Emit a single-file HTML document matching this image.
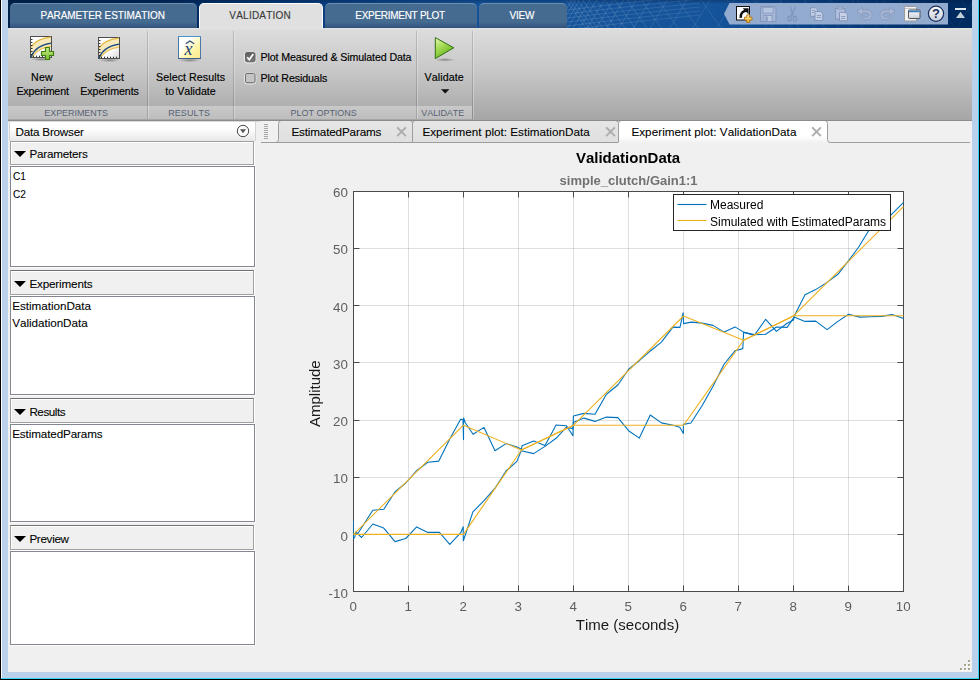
<!DOCTYPE html>
<html>
<head>
<meta charset="utf-8">
<title>Parameter Estimation - Validation</title>
<style>
html,body{margin:0;padding:0;}
body{width:980px;height:680px;overflow:hidden;background:#f0f0f0;position:relative;font-family:"Liberation Sans",sans-serif;color:#000;}
.a{position:absolute;}
.t{position:absolute;white-space:nowrap;line-height:14px;font-kerning:none;}
/* window frame */
#fl0{left:0;top:0;width:1px;height:680px;background:#000;}
#fl1{left:1px;top:0;width:1px;height:679px;background:#fff;}
#fl2{left:2px;top:0;width:6px;height:678px;background:#b9d1ea;}
#fr2{left:972px;top:0;width:6px;height:678px;background:#b9d1ea;}
#fr1{left:978px;top:0;width:1px;height:679px;background:#35d5f3;}
#fr0{left:979px;top:0;width:1px;height:680px;background:#000;}
#fb2{left:2px;top:672px;width:976px;height:6px;background:#b9d1ea;}
#fb1{left:1px;top:678px;width:978px;height:1px;background:#35d5f3;}
#fb0{left:0;top:679px;width:980px;height:1px;background:#000;}
/* header */
#hdr{left:8px;top:0;width:964px;height:28px;background:linear-gradient(90deg,#00224a 0px,#00285a 150px,#0a3f80 320px,#14539a 480px,#15549b 700px,#0c4387 800px,#002b60 940px,#002b60 964px);}
#hdrshade{left:8px;top:0;width:964px;height:4px;background:linear-gradient(180deg,rgba(0,20,50,.3),rgba(0,20,50,0));}
.tab{position:absolute;top:3px;height:25px;border-radius:5px 5px 0 0;box-sizing:border-box;background:linear-gradient(180deg,#466b91 0,#466b91 18px,#2b4e78 25px);border-top:1px solid #6e8eae;color:#fff;font-size:11px;text-align:center;line-height:23px;}
.tab.act{background:#e0e0e0;border:1px solid #fff;border-bottom:none;color:#333;height:26px;}
/* toolstrip */
#ts{left:8px;top:28px;width:964px;height:92px;background:linear-gradient(180deg,#e4e4e4 0,#dcdcdc 2px,#c6c6c6 45px,#a6a6a6 91px);}
#tsb{left:8px;top:119px;width:964px;height:2px;background:#8f8f8f;}
.sec{position:absolute;top:106px;height:13px;background:linear-gradient(180deg,#c9c9c9,#bdbdbd);}
.sep{position:absolute;top:31px;height:88px;width:1px;background:rgba(0,0,0,.15);}
.sepl{position:absolute;top:31px;height:88px;width:1px;background:rgba(255,255,255,.28);}
.bl{font-size:10.67px;color:#000;-webkit-text-stroke:0.16px #000;}
.tl{font-size:10px;color:#fff;transform:scaleY(1.06);transform-origin:0 10.4px;-webkit-text-stroke:0.15px currentColor;}
.sl{font-size:9px;color:#566274;transform:scaleY(1.1);transform-origin:0 10.1px;}
/* data browser */
.hd{position:absolute;left:10px;width:244px;height:24px;box-sizing:border-box;border:1px solid #a0a0a0;background:#f0f0f0;box-shadow:inset 1px 1px 0 #fff,1px 1px 0 #fff;}
.hd2{height:25px;border-top-color:#727272;}
.lb{position:absolute;left:10px;width:245px;box-sizing:border-box;border:1px solid #828790;background:#fff;box-shadow:1px 1px 0 #fbfbfb;}
.sg{font-size:11.7px;color:#000;line-height:16px;-webkit-text-stroke:0.08px #000;}
.tri{position:absolute;width:0;height:0;border-left:6px solid transparent;border-right:6px solid transparent;border-top:6.5px solid #000;margin-left:-0.5px;}
#tb1{left:40.40px;top:9.40px;letter-spacing:-0.084px;}
#tb2{left:229.30px;top:9.40px;letter-spacing:0.229px;}
#tb3{left:355.30px;top:9.40px;letter-spacing:-0.286px;}
#tb4{left:509.50px;top:9.40px;letter-spacing:-0.239px;}
#b1a{left:31.10px;top:70.00px;letter-spacing:0.089px;}
#b1b{left:16.40px;top:84.00px;letter-spacing:-0.159px;}
#b2a{left:94.30px;top:70.00px;letter-spacing:-0.011px;}
#b2b{left:80.30px;top:84.00px;letter-spacing:-0.060px;}
#b3a{left:156.10px;top:70.00px;letter-spacing:0.063px;}
#b3b{left:165.30px;top:84.00px;letter-spacing:0.007px;}
#c1{left:260.50px;top:50.00px;letter-spacing:-0.123px;}
#c2{left:260.50px;top:71.00px;letter-spacing:-0.107px;}
#b4a{left:424.60px;top:70.00px;letter-spacing:0.074px;}
#s1{left:44.30px;top:106.00px;letter-spacing:-0.071px;}
#s2{left:168.30px;top:106.00px;letter-spacing:0.032px;}
#s3{left:290.50px;top:106.00px;letter-spacing:-0.019px;}
#s4{left:421.30px;top:106.00px;letter-spacing:-0.087px;}
#dbtx{left:15.60px;top:123.50px;letter-spacing:-0.237px;}
#h1{left:29.40px;top:145.50px;letter-spacing:-0.218px;}
#p1{left:12.70px;top:167.70px;letter-spacing:0.000px;}
#p2{left:12.70px;top:185.50px;letter-spacing:0.000px;}
#h2{left:29.40px;top:275.50px;letter-spacing:-0.171px;}
#e1{left:12.20px;top:297.60px;letter-spacing:-0.035px;}
#e2{left:12.20px;top:315.30px;letter-spacing:-0.040px;}
#h3{left:29.40px;top:403.50px;letter-spacing:-0.471px;}
#r1{left:12.20px;top:425.60px;letter-spacing:-0.128px;}
#h4{left:29.40px;top:530.50px;letter-spacing:-0.321px;}
#d1{left:291.40px;top:123.50px;letter-spacing:-0.156px;}
#d2{left:422.40px;top:123.50px;letter-spacing:0.012px;}
#d3{left:631.40px;top:123.50px;letter-spacing:0.043px;}
#p1,#p2{transform:scaleX(.87);transform-origin:0 0;}
</style>
</head>
<body>
<!-- header -->
<div class="a" id="hdr"></div>
<svg class="a" id="mesh" style="left:8px;top:0;" width="964" height="28" viewBox="8 0 964 28"><defs><linearGradient id="mfade" x1="560" x2="972" y1="0" y2="0" gradientUnits="userSpaceOnUse"><stop offset="0" stop-color="#fff" stop-opacity=".13"/><stop offset=".35" stop-color="#fff" stop-opacity=".09"/><stop offset="1" stop-color="#fff" stop-opacity=".05"/></linearGradient></defs><path d="M572.0,0L555.0,28M575.5,0L558.5,28M579.6,0L562.6,28M584.4,0L567.4,28M590.0,0L573.0,28M596.6,0L579.6,28M604.2,0L587.2,28M613.2,0L596.2,28M623.7,0L606.7,28M636.0,0L619.0,28M650.4,0L633.4,28M667.2,0L650.2,28M686.9,0L669.9,28M709.9,0L692.9,28M733.9,0L716.9,28M757.9,0L740.9,28M781.9,0L764.9,28M805.9,0L788.9,28M829.9,0L812.9,28M853.9,0L836.9,28M877.9,0L860.9,28M901.9,0L884.9,28M925.9,0L908.9,28M949.9,0L932.9,28M973.9,0L956.9,28M997.9,0L980.9,28M566.0,0L586.0,28M569.2,0L589.2,28M573.0,0L593.0,28M577.4,0L597.4,28M582.7,0L602.7,28M588.9,0L608.9,28M596.2,0L616.2,28M604.9,0L624.9,28M615.0,0L635.0,28M627.1,0L647.1,28M641.3,0L661.3,28M658.0,0L678.0,28M677.8,0L697.8,28M701.1,0L721.1,28M727.1,0L747.1,28M753.1,0L773.1,28M779.1,0L799.1,28M805.1,0L825.1,28M831.1,0L851.1,28M857.1,0L877.1,28M883.1,0L903.1,28M909.1,0L929.1,28M935.1,0L955.1,28M961.1,0L981.1,28M987.1,0L1007.1,28M560,11Q620,3 700,-5M560,15Q620,7 700,-1M560,19Q620,11 700,3M560,23Q620,15 700,7M560,27Q620,19 700,11M560,31Q620,23 700,15" stroke="url(#mfade)" stroke-width="1" fill="none"/></svg>
<div class="a" id="hdrshade"></div>
<div class="tab" style="left:10px;width:187px;"></div>
<div class="tab act" style="left:199px;width:124px;"></div>
<div class="tab" style="left:325px;width:152px;"></div>
<div class="tab" style="left:479px;width:88px;"></div>
<div class="t tl" id="tb1">PARAMETER ESTIMATION</div>
<div class="t tl" id="tb2" style="color:#3c3c3c;">VALIDATION</div>
<div class="t tl" id="tb3">EXPERIMENT PLOT</div>
<div class="t tl" id="tb4">VIEW</div>

<!-- toolstrip -->
<div class="a" id="ts"></div>
<div class="sec" style="left:8px;width:464px;"></div>
<div class="sep" style="left:147px"></div><div class="sepl" style="left:148px"></div>
<div class="sep" style="left:233px"></div><div class="sepl" style="left:234px"></div>
<div class="sep" style="left:416px"></div><div class="sepl" style="left:417px"></div>
<div class="sep" style="left:472px"></div><div class="sepl" style="left:473px"></div>

<div class="t bl" id="b1a">New</div>
<div class="t bl" id="b1b">Experiment</div>
<div class="t bl" id="b2a">Select</div>
<div class="t bl" id="b2b">Experiments</div>
<div class="t bl" id="b3a">Select Results</div>
<div class="t bl" id="b3b">to Validate</div>
<div class="t bl" id="c1">Plot Measured &amp; Simulated Data</div>
<div class="t bl" id="c2">Plot Residuals</div>
<div class="t bl" id="b4a">Validate</div>

<div class="t sl" id="s1">EXPERIMENTS</div>
<div class="t sl" id="s2">RESULTS</div>
<div class="t sl" id="s3">PLOT OPTIONS</div>
<div class="t sl" id="s4">VALIDATE</div>

<!-- toolstrip icons -->
<svg class="a" id="ic" style="left:8px;top:28px;" width="472" height="92" viewBox="8 28 472 92">
<defs>
<linearGradient id="ibg" x1="0" y1="0" x2="1" y2="1"><stop offset="0" stop-color="#fff"/><stop offset=".6" stop-color="#fff"/><stop offset="1" stop-color="#d4d4d4"/></linearGradient>
<linearGradient id="xbg" x1="0" y1="0" x2="1" y2="1"><stop offset="0" stop-color="#ffffff"/><stop offset=".3" stop-color="#ffffff"/><stop offset=".65" stop-color="#fdf5a8"/><stop offset="1" stop-color="#fbe88a"/></linearGradient>
<linearGradient id="gpl" x1="0" y1="0" x2="0" y2="1"><stop offset="0" stop-color="#c9ec8e"/><stop offset="1" stop-color="#7fc02c"/></linearGradient>
<linearGradient id="gtr" x1="0" y1="0" x2="0.6" y2="1"><stop offset="0" stop-color="#e6f7b8"/><stop offset=".45" stop-color="#a5dc55"/><stop offset="1" stop-color="#5fae18"/></linearGradient>
<radialGradient id="shd"><stop offset="0" stop-color="#000" stop-opacity=".35"/><stop offset="1" stop-color="#000" stop-opacity="0"/></radialGradient>
<linearGradient id="cbg" x1="0" y1="0" x2="0" y2="1"><stop offset="0" stop-color="#5e5e5e"/><stop offset="1" stop-color="#7a7a7a"/></linearGradient>
<g id="expi">
<ellipse cx="11.5" cy="23.3" rx="11" ry="1.8" fill="url(#shd)"/>
<rect x="0.5" y="0.5" width="21" height="21" fill="url(#ibg)" stroke="#4d4d4d"/>
<path d="M1,10.6 C6,4.5 13,2 21,1 L21,10.2 C14,11 7,14 2.2,21 L1,21 Z" fill="#f8e9bd"/>
<path d="M1,10.6 C6,4.5 13,2 21,1.2" fill="none" stroke="#e3b93e" stroke-width="1.3"/>
<path d="M2.2,21 C7,14 14,11 21,10.2" fill="none" stroke="#e9c45a" stroke-width="1.3"/>
<path d="M1,21 C4,13 11,8.6 21,7.1" fill="none" stroke="#1d4b80" stroke-width="1.4"/>
<path d="M1,3.5h1.5M1,6.5h1.5M1,9.5h1.5M1,12.5h1.5M1,15.5h1.5M1,18.5h1.5M3.5,21v-1.3M6.5,21v-1.3M9.5,21v-1.3M12.5,21v-1.3M15.5,21v-1.3M18.5,21v-1.3" stroke="#333" stroke-width="1" fill="none"/>
</g>
</defs>
<use href="#expi" x="30" y="36"/>
<path d="M45.5,47.5h4v4h4v4h-4v4h-4v-4h-4v-4h4z" fill="url(#gpl)" stroke="#3d7d12" stroke-width="1.2" stroke-linejoin="round"/>
<use href="#expi" x="98" y="37"/>
<!-- x hat -->
<ellipse cx="189.5" cy="60.3" rx="11.5" ry="1.8" fill="url(#shd)"/>
<rect x="178.5" y="36.5" width="22" height="22" fill="url(#xbg)" stroke="#4a78a8"/>
<path d="M178,36.5h23" stroke="#4a94cc" fill="none"/>
<path d="M178,58.5h23" stroke="#3b5c8a" fill="none"/>
<path d="M186.2,43.4L189.9,41L193.8,43.5" stroke="#2a4a78" stroke-width="1.2" fill="none" stroke-linecap="round"/>
<text x="188.4" y="55" font-family="Liberation Serif, serif" font-style="italic" font-size="18" fill="#1f3f70" text-anchor="middle">x</text>
<!-- checkboxes -->
<rect x="244.6" y="52.2" width="11.2" height="10.8" rx="2.8" fill="none" stroke="#f6f6f6" stroke-opacity=".75"/>
<rect x="245.5" y="52.5" width="9.5" height="9.2" rx="1.6" fill="url(#cbg)" stroke="#686868"/>
<path d="M247.2,57.3l2.1,2.3l4,-5.6" stroke="#fff" stroke-width="1.7" fill="none"/>
<rect x="244.6" y="73.2" width="11.2" height="10.8" rx="2.8" fill="none" stroke="#f6f6f6" stroke-opacity=".75"/>
<rect x="245.5" y="73.5" width="9.5" height="9.2" rx="1.6" fill="#c4c4c4" stroke="#6e6e6e"/>
<!-- validate -->
<ellipse cx="445" cy="59.8" rx="10" ry="1.8" fill="url(#shd)"/>
<path d="M435.3,37.6L453.8,47.8L435.3,58.6Z" fill="url(#gtr)" stroke="#2f7010" stroke-width="1" stroke-linejoin="round"/>
<path d="M441,89.2h8.4l-4.2,4.2z" fill="#111"/>
</svg>
<!-- quick access bar -->
<svg class="a" id="qab" style="left:720px;top:0px;" width="252" height="28" viewBox="720 0 252 28">
<defs>
<linearGradient id="hq" x1="0" y1="0" x2="0" y2="1"><stop offset="0" stop-color="#fff"/><stop offset="1" stop-color="#c8ced8"/></linearGradient>
<linearGradient id="ypl" x1="0" y1="0" x2="0" y2="1"><stop offset="0" stop-color="#fff3a8"/><stop offset="1" stop-color="#f0b020"/></linearGradient>
</defs>
<path d="M724,13.8L729.5,3H948V24.5H729.5Z" fill="#92abcf"/>
<!-- new shortcut -->
<rect x="736.5" y="6.5" width="13" height="13.5" fill="#fff" stroke="#111"/>
<path d="M742.6,8.2H748.6V14.2Z" fill="#111"/><path d="M746.2,10.7C742.6,11 740.4,13.6 740.8,17.9" stroke="#111" stroke-width="2.5" fill="none"/>
<path d="M746.8,14.8h2.8v2.4h2.4v2.8h-2.4v2.4h-2.8v-2.4h-2.4v-2.8h2.4z" fill="url(#ypl)" stroke="#b07018" stroke-width=".9"/>
<!-- save (disabled) -->
<g opacity=".75">
<path d="M760.5,6.5h14l1.5,1.5v13.500h-15.500z" fill="#a9b9d8" stroke="#7f8fb6"/>
<rect x="763" y="7.5" width="10" height="5.5" fill="#c4d0e6" stroke="#8a98bc" stroke-width=".8"/>
<rect x="764" y="15.500" width="8" height="6" fill="#c9d3e8" stroke="#8190b6" stroke-width=".8"/>
<rect x="765.500" y="16.500" width="2.200" height="4.500" fill="#8494b8"/>
</g>
<!-- cut -->
<g stroke="#7f8fb6" fill="none" stroke-width="1.1" opacity=".85">
<path d="M790.200,6.500L793.500,16.500M795.800,6.500L790.500,16.500"/>
<ellipse cx="789.500" cy="18.700" rx="1.700" ry="2.300"/><ellipse cx="795" cy="18.700" rx="1.700" ry="2.300"/>
</g>
<!-- copy -->
<g fill="#c6d1e7" stroke="#7f8fb6" stroke-width=".9" opacity=".9">
<path d="M810.500,7.800h5l2,2v6.500h-7z"/>
<path d="M815,11.500h5.500l2.300,2.300v6.700h-7.800z"/>
<path d="M812,10.500h3M812,12.500h2M816.800,15.500h4.200M816.800,17.500h4.200" stroke-width=".8"/>
</g>
<!-- paste -->
<g fill="#b4c2de" stroke="#7f8fb6" stroke-width=".9" opacity=".9">
<path d="M835.500,8.500h9.500v10.500h-9.500z"/>
<path d="M838,7h4.500v2h-4.500z" fill="#c6d1e7"/>
<path d="M839.500,12.300h5.500l2.500,2.500v6h-8z" fill="#cdd7ea"/>
<path d="M841,16.500h4.500M841,18.500h4.500" stroke-width=".8"/>
</g>
<!-- undo -->
<path d="M856.800,11.500L862.500,7.300V10H866.500C870,10 872,12.200 872,15 C872,17.800 870,19.800 866.500,19.800H862V17.300H866.300C868.300,17.300 869.300,16.300 869.300,15 C869.300,13.600 868.300,12.800 866.300,12.800H862.500V15.600Z" fill="#aab9d6" stroke="#8595ba" stroke-width=".8" opacity=".9"/>
<!-- redo -->
<path d="M895.200,11.500L889.500,7.300V10H885.500C882,10 880,12.200 880,15 C880,17.800 882,19.800 885.500,19.800H890V17.300H885.700C883.700,17.300 882.700,16.300 882.700,15 C882.700,13.600 883.700,12.800 885.700,12.800H889.500V15.600Z" fill="#aab9d6" stroke="#8595ba" stroke-width=".8" opacity=".9"/>
<!-- windows -->
<rect x="904.500" y="6.500" width="12" height="14.500" rx="1" fill="#f2f2f2" stroke="#9a9a9a"/>
<path d="M905,8.500h11" stroke="#c8c8c8"/>
<rect x="908.500" y="10" width="11.500" height="8.500" rx=".8" fill="url(#hq)" stroke="#555"/>
<rect x="909" y="10.500" width="10.500" height="1.800" fill="#3f7fbd"/>
<!-- help -->
<circle cx="936" cy="13.700" r="7.600" fill="url(#hq)" stroke="#1c2f5e" stroke-width="1.200"/>
<text x="936" y="18.300" font-family="Liberation Sans, sans-serif" font-weight="bold" font-size="13" fill="#1c2f5e" text-anchor="middle">?</text>
<!-- minimize -->
<rect x="955" y="8" width="11" height="2" fill="#dfe7ef"/>
<path d="M956,18L960.500,11.800L965,18Z" fill="#c3d0d8"/>
</svg>

<!-- data browser -->
<div class="a" id="dbt" style="left:9px;top:122px;width:247px;height:19px;box-sizing:border-box;border-left:1px solid #d4d4d4;border-right:1px solid #d4d4d4;background:linear-gradient(180deg,#fff 0,#fdfdfd 40%,#e7e7e7 100%);"></div>
<div class="t sg" id="dbtx">Data Browser</div>
<!-- data browser menu button -->
<svg class="a" id="dbm" style="left:235px;top:123px;" width="16" height="16" viewBox="0 0 16 16">
<circle cx="8" cy="8" r="5.700" fill="#fbfbfb" stroke="#4a4a4a" stroke-width="1"/>
<path d="M5,6.300h6l-3,4z" fill="#555"/>
</svg>


<div class="hd" style="top:141px;"></div>
<div class="tri" style="left:14px;top:151px;"></div>
<div class="t sg" id="h1">Parameters</div>
<div class="lb" style="top:166px;height:101px;"></div>
<div class="t sg" id="p1">C1</div>
<div class="t sg" id="p2">C2</div>

<div class="hd hd2" style="top:270px;"></div>
<div class="tri" style="left:14px;top:281px;"></div>
<div class="t sg" id="h2">Experiments</div>
<div class="lb" style="top:296px;height:99px;"></div>
<div class="t sg" id="e1">EstimationData</div>
<div class="t sg" id="e2">ValidationData</div>

<div class="hd hd2" style="top:398px;"></div>
<div class="tri" style="left:14px;top:409px;"></div>
<div class="t sg" id="h3">Results</div>
<div class="lb" style="top:424px;height:98px;"></div>
<div class="t sg" id="r1">EstimatedParams</div>

<div class="hd hd2" style="top:525px;"></div>
<div class="tri" style="left:14px;top:536px;"></div>
<div class="t sg" id="h4">Preview</div>
<div class="lb" style="top:551px;height:94px;"></div>


<!-- document tabs -->
<div class="a" style="left:8px;top:120px;width:964px;height:1px;background:#8c8c8c;"></div>
<div class="a" style="left:8px;top:121px;width:252px;height:1px;background:#dadada;"></div>
<svg class="a" id="dtabs" style="left:256px;top:120px;" width="716" height="25" viewBox="256 120 716 25">
<defs>
<linearGradient id="tg" x1="0" y1="0" x2="0" y2="1"><stop offset="0" stop-color="#e6e6e6"/><stop offset="1" stop-color="#dfdfdf"/></linearGradient>
<linearGradient id="tga" x1="0" y1="0" x2="0" y2="1"><stop offset="0" stop-color="#ffffff"/><stop offset="0.7" stop-color="#ffffff"/><stop offset="1" stop-color="#f0f0f0"/></linearGradient>
</defs>

<!-- tab 1 -->
<path d="M275.5,142.5 Q278.5,142.5 278.5,139.5 L278.5,123.5 Q278.5,120.5 281.5,120.5 L409.5,120.5 Q412.5,120.5 412.5,123.5 L412.5,139.5 Q412.5,142.5 415.5,142.5 Z" fill="url(#tg)" stroke="#9d9d9d"/>
<!-- tab 2 -->
<path d="M412.5,142.5 L412.5,123.5 Q412.5,120.5 415.5,120.5 L615.5,120.5 Q618.5,120.5 618.5,123.5 L618.5,139.5 Q618.5,142.5 621.5,142.5 Z" fill="url(#tg)" stroke="#9d9d9d"/>
<!-- baseline -->
<path d="M261,142.5H619M827,142.5H970" stroke="#9d9d9d" fill="none"/>
<!-- tab 3 active -->
<path d="M618.5,143 L618.5,123.5 Q618.5,120.5 621.5,120.5 L824.5,120.5 Q827.5,120.5 827.5,123.5 L827.5,139.5 Q827.5,142.5 830.5,142.5 L830.5,143 Z" fill="url(#tga)" stroke="none"/>
<path d="M618.5,142 L618.5,123.5 Q618.5,120.5 621.5,120.5 L824.5,120.5 Q827.5,120.5 827.5,123.5 L827.5,139.5 Q827.5,142.5 830.5,142.5" fill="none" stroke="#9d9d9d"/>
<path d="M279,120.5H828" stroke="#8c8c8c" fill="none"/>
<!-- grip -->
<path d="M264,124.5h4M264,126.5h4M264,128.5h4M264,130.5h4M264,132.5h4M264,134.5h4M264,136.5h4M264,138.5h4" stroke="#a8a8a8" fill="none"/>
<!-- close icons -->
<g stroke="#adadad" stroke-width="1.9" fill="none" stroke-linecap="square">
<path d="M397.8,128l7.4,7.4M405.2,128l-7.4,7.4"/>
<path d="M606.8,128l7.4,7.4M614.2,128l-7.4,7.4"/>
<path d="M812.8,128l7.4,7.4M820.2,128l-7.4,7.4"/>
</g>
</svg>
<div class="t sg dt" id="d1">EstimatedParams</div>
<div class="t sg dt" id="d2">Experiment plot: EstimationData</div>
<div class="t sg dt" id="d3">Experiment plot: ValidationData</div>
<svg class="a" id="plot" style="left:256px;top:143px;will-change:transform;font-kerning:none;" width="716" height="529" viewBox="256 143 716 529" font-family="Liberation Sans, sans-serif">
<rect x="353" y="191" width="551" height="401" fill="#fff"/>
<path d="M408.5,192V591M463.5,192V591M518.5,192V591M573.5,192V591M628.5,192V591M683.5,192V591M738.5,192V591M793.5,192V591M848.5,192V591" stroke="#262626" stroke-opacity=".15" stroke-width="1" fill="none"/>
<path d="M354,534.5H903M354,477.5H903M354,420.5H903M354,362.5H903M354,305.5H903M354,248.5H903" stroke="#262626" stroke-opacity=".15" stroke-width="1" fill="none"/>
<path d="M353.5,591v-5.5M353.5,192v5.5M408.5,591v-5.5M408.5,192v5.5M463.5,591v-5.5M463.5,192v5.5M518.5,591v-5.5M518.5,192v5.5M573.5,591v-5.5M573.5,192v5.5M628.5,591v-5.5M628.5,192v5.5M683.5,591v-5.5M683.5,192v5.5M738.5,591v-5.5M738.5,192v5.5M793.5,591v-5.5M793.5,192v5.5M848.5,591v-5.5M848.5,192v5.5M903.5,591v-5.5M903.5,192v5.5M354,591.5h5.5M903,591.5h-5.5M354,534.5h5.5M903,534.5h-5.5M354,477.5h5.5M903,477.5h-5.5M354,420.5h5.5M903,420.5h-5.5M354,362.5h5.5M903,362.5h-5.5M354,305.5h5.5M903,305.5h-5.5M354,248.5h5.5M903,248.5h-5.5M354,191.5h5.5M903,191.5h-5.5" stroke="#4a4a4a" stroke-width="1" fill="none"/>
<rect x="353.5" y="191.5" width="550" height="400" fill="none" stroke="#4a4a4a" stroke-width="1"/>
<clipPath id="cp"><rect x="353" y="191" width="551" height="401"/></clipPath>
<g clip-path="url(#cp)" fill="none" stroke-width="1.1" stroke-linejoin="round">
<polyline stroke="#0072bd" points="353.5,534.4 357.9,533.5 372.8,510.3 383.8,509.2 394.9,492.0 405.7,483.0 416.7,470.7 427.8,462.3 438.8,461.1 449.8,439.0 460.6,419.2 463.0,419.5 463.5,439.6 463.6,418.0 465.3,422.8 473.1,434.3 484.0,427.4 495.0,450.7 506.0,443.6 516.9,447.1 521.4,449.3 522.1,445.7 533.6,441.1 545.0,445.4 556.1,425.0 566.4,425.7 573.0,435.7 573.4,416.0 583.9,413.4 595,414.3 606.4,394.3 617.9,385 628.6,369.3 639.3,360.7 650.7,350.7 661.4,342.1 672.9,327.1 680,327.4 683.1,312.9 683.6,323.6 691.4,322.1 702.1,323.1 712.9,325.4 724.3,332.1 735,326.9 743.6,332.1 754.3,335.4 765.7,319.3 776.4,331.4 787.1,323.3 793.6,320 794,316.4 805,294.7 815.7,289.6 827.1,282.4 837.9,274.3 848.4,260.8 858.4,247.5 868.9,230.3 879.5,222 890.8,215.1 903.3,202.6"/>
<polyline stroke="#0072bd" points="353.3,534.4 353.2,521 353.3,538.5 354.6,537.5 356,531.5 357.9,534.1 361.6,537.5 372.8,524.0 383.7,528.1 395.1,541.6 405.7,538.5 416.7,526.9 427.8,532.4 439.4,532.4 449.8,544.3 460.8,532.7 463.2,526.8 463.3,540.7 465.7,533.7 472.9,511.9 484,500.7 495,488.2 506,471.0 516.9,461.4 521.4,450.4 521.4,450.7 533.6,453.6 545.0,446.4 556.1,438.3 566.4,427.1 572.9,428.6 573.3,422.5 583.9,418.1 595,421.4 606.4,417.1 617.9,417.6 628.6,430.7 639.3,438.1 650.3,415 661.4,422.9 672.1,425 679.8,427.3 683.4,433.5 683.4,424.4 690.9,423 701.9,406 712.9,386.6 724.2,364 735.2,350.7 742.8,348.6 743.6,332.4 754.3,334.6 765.7,334.3 776.4,327 787.1,327.4 793.6,317.9 794,317.1 805,321.4 815.7,321.1 827.1,329.6 837.9,321.4 848.6,314.3 860,317.1 870,316.7 881.4,316.4 892.1,314.6 903.6,318.6"/>
<polyline stroke="#edb120" points="353.5,534.4 463.5,425.2 521.4,450 573.5,425.2 683.5,425.3 743.6,340.3 793.8,315.7 903.5,315.7"/>
<polyline stroke="#edb120" points="353.5,534.4 463.5,534.4 521.4,450 573.5,425.2 683.5,316 743.6,340.3 793.8,315.7 903.5,206.7"/>
</g>
<g font-size="13.33" fill="#5e5e5e">
<text x="353.2" y="611" text-anchor="middle">0</text>
<text x="408.2" y="611" text-anchor="middle">1</text>
<text x="463.2" y="611" text-anchor="middle">2</text>
<text x="518.2" y="611" text-anchor="middle">3</text>
<text x="573.2" y="611" text-anchor="middle">4</text>
<text x="628.2" y="611" text-anchor="middle">5</text>
<text x="683.2" y="611" text-anchor="middle">6</text>
<text x="738.2" y="611" text-anchor="middle">7</text>
<text x="793.2" y="611" text-anchor="middle">8</text>
<text x="848.2" y="611" text-anchor="middle">9</text>
<text x="903.2" y="611" text-anchor="middle">10</text>
<text x="347.8" y="598" text-anchor="end">-10</text>
<text x="347.8" y="541" text-anchor="end">0</text>
<text x="347.8" y="483" text-anchor="end">10</text>
<text x="347.8" y="426" text-anchor="end">20</text>
<text x="347.8" y="369" text-anchor="end">30</text>
<text x="347.8" y="312" text-anchor="end">40</text>
<text x="347.8" y="254" text-anchor="end">50</text>
<text x="347.8" y="197" text-anchor="end">60</text>
</g>
<text id="ttl" x="628" y="162.8" text-anchor="middle" font-size="15" font-weight="bold" fill="#000">ValidationData</text>
<text id="sub" x="628.6" y="184.9" text-anchor="middle" font-size="13" font-weight="bold" fill="#717171">simple_clutch/Gain1:1</text>
<text id="xl" x="627.5" y="629.6" text-anchor="middle" font-size="15" fill="#1a1a1a">Time (seconds)</text>
<text id="yl" transform="translate(320.4,393.7) rotate(-90)" text-anchor="middle" font-size="15" fill="#1a1a1a">Amplitude</text>
<rect x="673.5" y="194.5" width="217" height="36" fill="#fff" stroke="#262626" stroke-width="1"/>
<path d="M677.5,204.5H706.5" stroke="#0072bd" stroke-width="1.1"/>
<path d="M677.5,220.5H706.5" stroke="#edb120" stroke-width="1.1"/>
<text id="lg1" x="710" y="208.8" font-size="12" fill="#000">Measured</text>
<text id="lg2" x="710" y="225.7" font-size="12" fill="#000">Simulated with EstimatedParams</text>
</svg>

<!-- resize grip -->
<svg class="a" style="left:958px;top:658px;" width="14" height="14" viewBox="958 658 14 14"><path d="M969,661h2v2h-2zM965,665h2v2h-2zM969,665h2v2h-2zM961,669h2v2h-2zM965,669h2v2h-2zM969,669h2v2h-2z" fill="#fff"/><path d="M968,660h2v2h-2zM964,664h2v2h-2zM968,664h2v2h-2zM960,668h2v2h-2zM964,668h2v2h-2zM968,668h2v2h-2z" fill="#a9a68f"/></svg>
<!-- window frame (on top) -->
<div class="a" id="fl0"></div><div class="a" id="fl1"></div><div class="a" id="fl2"></div>
<div class="a" id="fr2"></div><div class="a" id="fb2"></div>
<div class="a" id="fr1"></div><div class="a" id="fb1"></div>
<div class="a" id="fr0"></div><div class="a" id="fb0"></div>
</body>
</html>
